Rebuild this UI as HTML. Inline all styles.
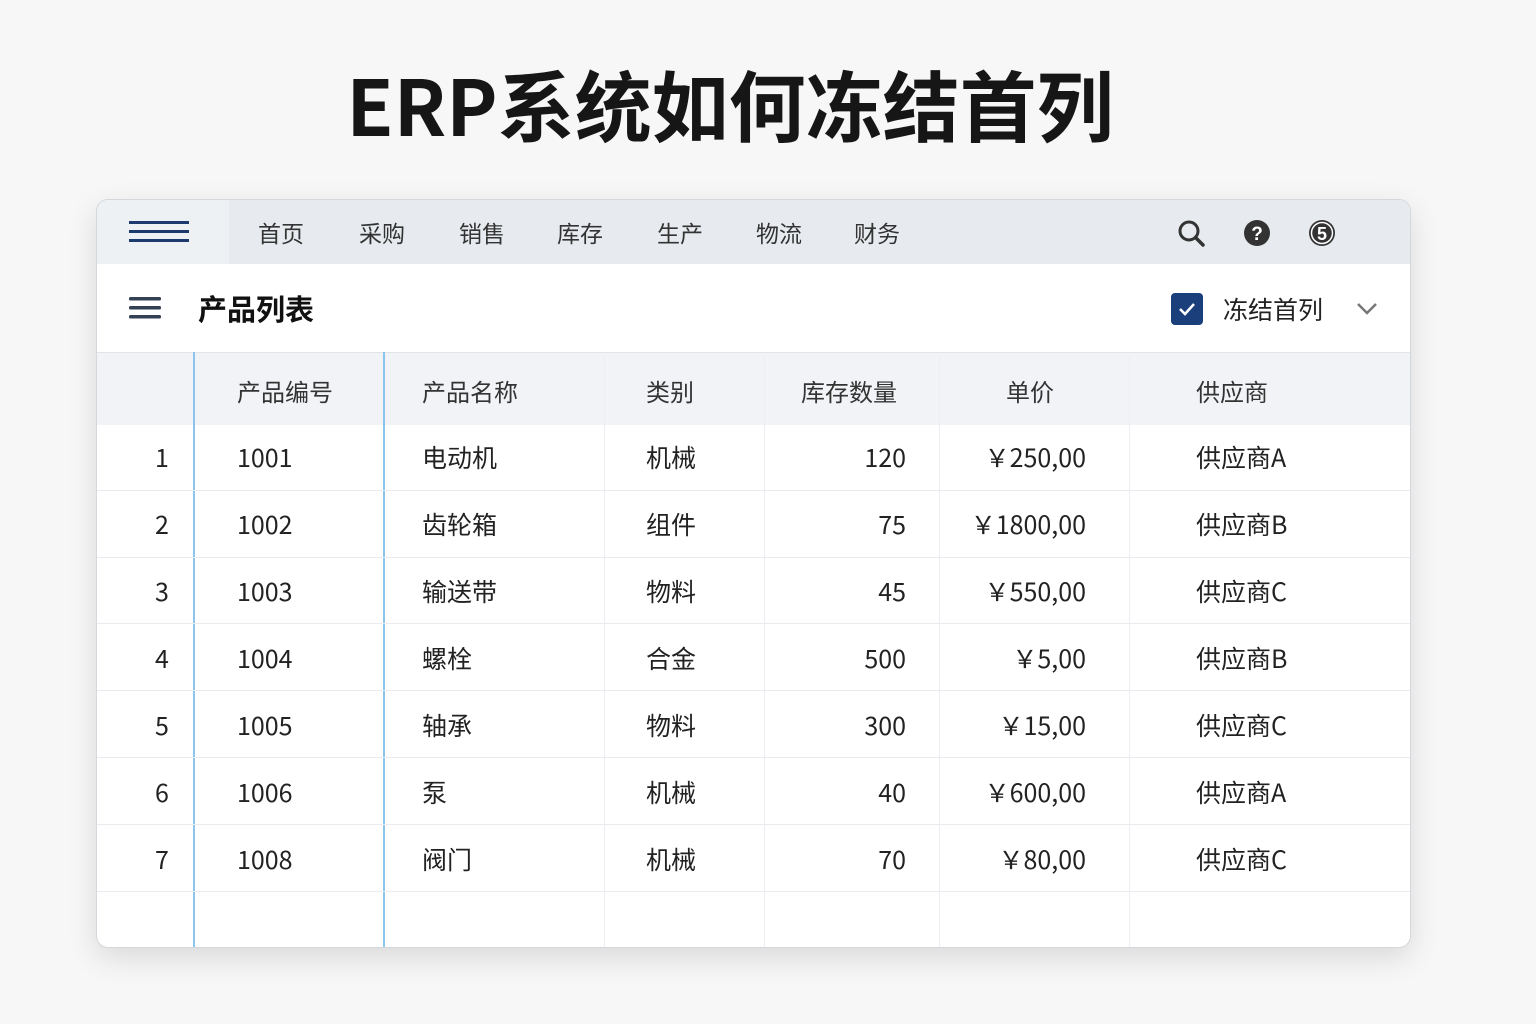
<!DOCTYPE html><html><head><meta charset="utf-8"><style>
body{margin:0;width:1536px;height:1024px;background:#f7f7f7;font-family:"Noto Sans CJK SC","Liberation Sans",sans-serif;position:relative;overflow:hidden;color:#222}
.t{position:absolute;left:0;width:1460px;text-align:center;top:58px;font-size:77px;line-height:92px;font-weight:bold;color:#161616}
.card{position:absolute;left:96px;top:199px;width:1313px;height:747px;background:#fff;border:1px solid #d4d8dc;border-radius:12px;overflow:hidden;box-shadow:0 10px 30px rgba(0,0,0,.12)}
.nav{position:absolute;left:0;top:0;width:100%;height:64px;background:#e7ebef}
.nav .hb{position:absolute;left:0;top:0;width:132px;height:64px;background:#eef1f4}
.a{position:absolute;font-size:23px;line-height:30px;color:#333}
.ab{position:absolute}
.hdr{position:absolute;left:0;top:152px;width:100%;height:72px;background:#f1f3f6;border-top:1px solid #e2e5e8}
.vl{position:absolute;top:152px;bottom:0;width:1px;background:#eceef1}
.bl{position:absolute;top:152px;bottom:0;width:2px;background:#8cc4ec}
.hl{position:absolute;left:0;width:100%;height:1px;background:#e9ebee}
.c{position:absolute;font-size:25px;line-height:30px;color:#222;white-space:nowrap}
.h{color:#333;font-size:24px}
.r{text-align:right}
</style></head><body>
<div class="t">ERP系统如何冻结首列</div>
<div class="card">
<div class="nav"><div class="hb"></div>
<svg class="ab" style="left:32px;top:21px" width="60" height="22"><rect y="0" width="60" height="3" fill="#1d3a6e"/><rect y="9" width="60" height="3" fill="#1d3a6e"/><rect y="18" width="60" height="3" fill="#1d3a6e"/></svg>
<span class="a" style="left:161px;top:17px">首页</span><span class="a" style="left:262px;top:17px">采购</span><span class="a" style="left:362px;top:17px">销售</span><span class="a" style="left:460px;top:17px">库存</span><span class="a" style="left:560px;top:17px">生产</span><span class="a" style="left:659px;top:17px">物流</span><span class="a" style="left:757px;top:17px">财务</span>
<svg class="ab" style="left:1080px;top:19px" width="30" height="30"><circle cx="12" cy="12" r="9" fill="none" stroke="#333" stroke-width="3"/><line x1="18.5" y1="18.5" x2="26" y2="26" stroke="#333" stroke-width="3.5" stroke-linecap="round"/></svg>
<svg class="ab" style="left:1146px;top:19px" width="28" height="28"><circle cx="14" cy="14" r="13" fill="#333"/><text x="14" y="21" text-anchor="middle" font-size="19" font-weight="bold" fill="#fff" font-family="Liberation Sans">?</text></svg>
<svg class="ab" style="left:1211px;top:19px" width="28" height="28"><circle cx="14" cy="14" r="13" fill="#333"/><circle cx="14" cy="14" r="10.5" fill="none" stroke="#fff" stroke-width="1.5"/><text x="14" y="21" text-anchor="middle" font-size="18" font-weight="bold" fill="#fff" font-family="Liberation Sans">5</text></svg>
</div>
<svg class="ab" style="left:32px;top:97px" width="32" height="24"><rect y="0" width="32" height="3.5" rx="1.5" fill="#334155"/><rect y="9" width="32" height="3.5" rx="1.5" fill="#334155"/><rect y="18" width="32" height="3.5" rx="1.5" fill="#334155"/></svg>
<span class="c" style="left:101px;top:93px;font-size:29px;font-weight:bold;color:#111">产品列表</span>
<svg class="ab" style="left:1073px;top:92px" width="34" height="34"><rect x="1" y="1" width="32" height="32" rx="4" fill="#1b3f7a"/><path d="M10 17l5 5 9-10" fill="none" stroke="#fff" stroke-width="2.5"/></svg>
<span class="c" style="left:1126px;top:94px;font-size:25px;color:#222">冻结首列</span>
<svg class="ab" style="left:1259px;top:101px" width="22" height="14"><path d="M2 3l9 9 9-9" fill="none" stroke="#777" stroke-width="2.5"/></svg>
<div class="hdr"></div>
<div class="vl" style="left:507px"></div><div class="vl" style="left:667px"></div><div class="vl" style="left:842px"></div><div class="vl" style="left:1032px"></div>
<div class="bl" style="left:96px"></div><div class="bl" style="left:286px"></div>
<div class="hl" style="top:290px"></div><div class="hl" style="top:357px"></div><div class="hl" style="top:423px"></div><div class="hl" style="top:490px"></div><div class="hl" style="top:557px"></div><div class="hl" style="top:624px"></div><div class="hl" style="top:691px"></div>
<span class="c h" style="left:140px;top:176px">产品编号</span><span class="c h" style="left:325px;top:176px">产品名称</span><span class="c h" style="left:549px;top:176px">类别</span><span class="c h" style="left:704px;top:176px">库存数量</span><span class="c h" style="left:909px;top:176px">单价</span><span class="c h" style="left:1099px;top:176px">供应商</span>
<div id="rows"></div>
</div>
<script>
var d=[["1","1001","电动机","机械","120","￥250,00","供应商A"],["2","1002","齿轮箱","组件","75","￥1800,00","供应商B"],["3","1003","输送带","物料","45","￥550,00","供应商C"],["4","1004","螺栓","合金","500","￥5,00","供应商B"],["5","1005","轴承","物料","300","￥15,00","供应商C"],["6","1006","泵","机械","40","￥600,00","供应商A"],["7","1008","阀门","机械","70","￥80,00","供应商C"]];
var h="";d.forEach(function(r,i){var y=242+i*67;
h+='<span class="c" style="left:40px;width:50px;text-align:center;top:'+y+'px">'+r[0]+'</span>';
h+='<span class="c" style="left:140px;top:'+y+'px">'+r[1]+'</span>';
h+='<span class="c" style="left:325px;top:'+y+'px">'+r[2]+'</span>';
h+='<span class="c" style="left:549px;top:'+y+'px">'+r[3]+'</span>';
h+='<span class="c r" style="left:700px;width:109px;top:'+y+'px">'+r[4]+'</span>';
h+='<span class="c r" style="left:850px;width:139px;top:'+y+'px">'+r[5]+'</span>';
h+='<span class="c" style="left:1099px;top:'+y+'px">'+r[6]+'</span>';});
document.getElementById("rows").innerHTML=h;
</script>
</body></html>
